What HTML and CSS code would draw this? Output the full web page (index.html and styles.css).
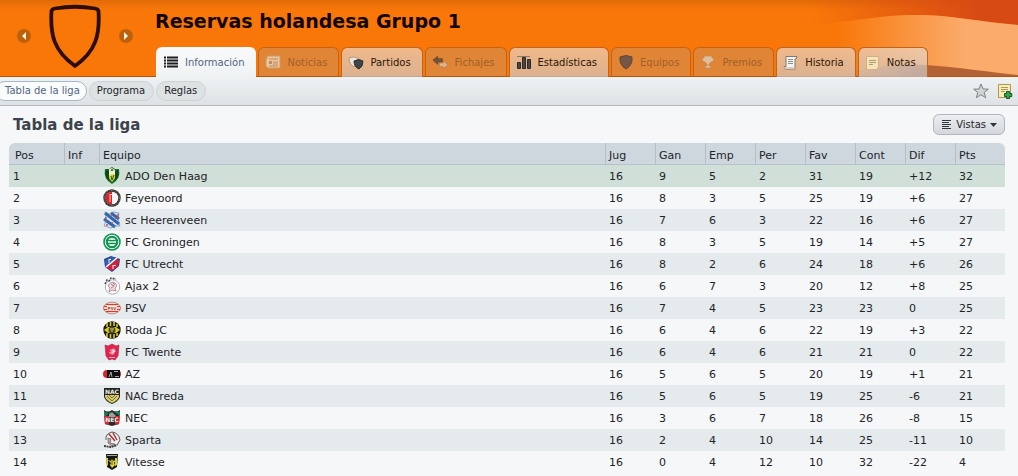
FILE: index.html
```html
<!DOCTYPE html>
<html lang="es">
<head>
    <meta charset="UTF-8">
    <meta name="viewport" content="width=device-width, initial-scale=1.0">
    <title>Reservas holandesa Grupo 1</title>
    <link rel="stylesheet" href="styles.css">
</head>
<body>
    <header class="header">
        <svg class="wave" width="260" height="76" viewBox="0 0 260 76" aria-hidden="true">
            <defs>
                <linearGradient id="waveDark" x1="0" x2="1">
                    <stop offset="0.2" stop-color="#d84a14" stop-opacity="0"/>
                    <stop offset="0.85" stop-color="#d84a14"/>
                </linearGradient>
                <linearGradient id="waveLight" x1="0" x2="1">
                    <stop offset="0" stop-color="#fbab6b" stop-opacity="0"/>
                    <stop offset="0.25" stop-color="#fbab6b" stop-opacity="0.35"/>
                    <stop offset="0.7" stop-color="#fbab6b"/>
                </linearGradient>
                <linearGradient id="waveBase" x1="0" x2="1">
                    <stop offset="0" stop-color="#b36233" stop-opacity="0"/>
                    <stop offset="0.4" stop-color="#b36233"/>
                </linearGradient>
            </defs>
            <path d="M0 0H260V25C215 21 190 14 150 15C120 16 100 20 80 22L0 34Z" fill="url(#waveDark)"/>
            <path d="M80 22C100 20 120 16 150 15C190 14 215 21 260 25V76H80Z" fill="url(#waveLight)"/>
            <path d="M90 72C120 66 145 64 168 65C200 67 230 72 260 75V76H90Z" fill="url(#waveBase)"/>
        </svg>
        <div class="picker">
            <button class="arrow" aria-label="Anterior"><svg width="14" height="14" viewBox="0 0 14 14"><path d="M9 3V11L5 7Z" fill="#fff3d8"/></svg></button>
            <svg class="shield" width="54" height="64" viewBox="0 0 54 64"><path d="M3.500 7Q4 5 7 4.500Q27 1 47 4.500Q50 5 50.500 7C52 31 48 47 27 62C6 47 2 31 3.500 7Z" fill="none" stroke="#2b0d02" stroke-width="3.800" stroke-linejoin="round"/></svg>
            <button class="arrow" aria-label="Siguiente"><svg width="14" height="14" viewBox="0 0 14 14"><path d="M5 3V11L9 7Z" fill="#fff3d8"/></svg></button>
        </div>
        <div class="headline">
            <h1>Reservas holandesa Grupo 1</h1>
            <nav class="tabs">
                <a class="tab active" href="#"><svg width="16" height="16" viewBox="0 0 16 16"><path d="M1 2.500H3M1 5.500H3M1 8.500H3M1 11.500H3M4 2.500H15M4 5.500H15M4 8.500H15M4 11.500H15" stroke="#1c1f22" stroke-width="1.800"/></svg>Información</a>
                <a class="tab off" href="#"><svg width="16" height="16" viewBox="0 0 16 16"><path d="M2 2H15V14H3L1 12V5H2Z" fill="#efc59a" stroke="#c89a6c"/><path d="M4 5H13M8 8H13M8 10H13M4 12H13" stroke="#b98c62"/><path d="M4 7H7V10H4Z" fill="#b98c62"/></svg>Noticias</a>
                <a class="tab" href="#"><svg width="16" height="16" viewBox="0 0 16 16"><path d="M1 3Q5 1 10 3Q10 9 6 12Q1 9 1 3Z" fill="#eee5dc" stroke="#b39a84"/><path d="M6 6Q11 3 15 6Q15 12 11 14Q6 12 6 6Z" fill="#414548" stroke="#2d3033"/></svg>Partidos</a>
                <a class="tab off" href="#"><svg width="17" height="16" viewBox="0 0 18 16"><path d="M1 6L6 2V4.500H11V8H6V10.500Z" fill="#75513a" stroke="#5f4028" stroke-width=".7"/><path d="M17 11L12 7V9H8V13H12V15Z" fill="#dcb48e" stroke="#ab7c52" stroke-width=".7"/></svg>Fichajes</a>
                <a class="tab" href="#"><svg width="16" height="16" viewBox="0 0 16 16"><path d="M1 1.500H14" stroke="#8e7764"/><path d="M1.500 7.500H4.500V13.500H1.500ZM6.500 2.500H9.500V13.500H6.500ZM11.500 4.500H14.500V13.500H11.500Z" fill="#4b4644" stroke="#302a27"/></svg>Estadísticas</a>
                <a class="tab off" href="#"><svg width="16" height="16" viewBox="0 0 16 16"><path d="M2 3Q8 0 14 3Q15 11 8 15Q1 11 2 3Z" fill="#765747" stroke="#654632"/></svg>Equipos</a>
                <a class="tab off" href="#"><svg width="16" height="16" viewBox="0 0 16 16"><path d="M4 2H12V4H14Q14 8 11 8L9 10V12H11V14H5V12H7V10L5 8Q2 8 2 4H4Z" fill="#e3bd96" stroke="#b98b60" stroke-width=".7"/></svg>Premios</a>
                <a class="tab" href="#"><svg width="16" height="16" viewBox="0 0 16 16"><path d="M3 1.500H14L13 4H12V14H2L1 11.500H3Z" fill="#f4f3ec" stroke="#827668"/><path d="M5 4.500H10M5 6.500H10M5 8.500H10" stroke="#819099"/><path d="M1 12H10L12 14H2Z" fill="#d3cdc2"/></svg>Historia</a>
                <a class="tab" href="#"><svg width="16" height="16" viewBox="0 0 16 16"><path d="M1.500 1.500H13.500V12L11.500 14.500H1.500Z" fill="#f6e4b8" stroke="#d0b088"/><path d="M4 5.500H11M4 7.500H11M4 9.500H8" stroke="#b39a70"/></svg>Notas</a>
            </nav>
        </div>
    </header>

    <div class="subnav">
        <nav class="pills">
            <a class="pill current" href="#">Tabla de la liga</a>
            <a class="pill" href="#">Programa</a>
            <a class="pill" href="#">Reglas</a>
        </nav>
        <div class="tools">
            <button class="tool" aria-label="Favorito"><svg width="16" height="16" viewBox="0 0 16 16"><path d="M8 1L10 6L15.300 6.200L11.200 9.500L12.600 14.700L8 11.700L3.400 14.700L4.800 9.500L.7 6.200L6 6Z" fill="#d2d5d8" stroke="#7c8186"/></svg></button>
            <button class="tool" aria-label="Añadir nota"><svg width="16" height="16" viewBox="0 0 16 16"><path d="M1.500 1.500H13.500V14.500H1.500Z" fill="#f8edb8" stroke="#ad9850"/><path d="M4 4.500H11M4 6.500H11M4 8.500H8" stroke="#ac9b5e"/><path d="M9.500 8.500H12.500V10.500H14.800V13.500H12.500V15.500H9.500V13.500H7.500V10.500H9.500Z" fill="#36a04b" stroke="#17582a"/></svg></button>
        </div>
    </div>

    <main class="content">
        <div class="bar">
            <h2>Tabla de la liga</h2>
            <button class="views"><svg width="11" height="11" viewBox="0 0 11 11"><path d="M1 1.500H10M1 3.500H8M1 5.500H10M1 7.500H8M1 9.500H10" stroke="#30363b"/></svg>Vistas<svg width="7" height="4" viewBox="0 0 7 4"><path d="M0 0H7L3.500 4Z" fill="#30363b"/></svg></button>
        </div>
        <table class="league">
            <thead>
                <tr><th class="pos">Pos</th><th class="inf">Inf</th><th>Equipo</th><th class="num">Jug</th><th class="num">Gan</th><th class="num">Emp</th><th class="num">Per</th><th class="num">Fav</th><th class="num">Cont</th><th class="num">Dif</th><th class="num">Pts</th></tr>
            </thead>
            <tbody>
                <tr class="leader"><td>1</td><td></td><td><div class="team"><svg class="crest" viewBox="0 0 18 18"><path d="M2 2L6 2L9 0L12 2L16 2Q18 12 9 17Q0 12 2 2Z" fill="#176b27"/><path d="M3 3L6 4V14Q1 9 3 3ZM15 3L12 4V14Q17 9 15 3Z" fill="#0a4a17"/><path d="M6 4H12V11L9 15L6 11Z" fill="#d9d23a"/><path d="M6 2L9 1L12 3V8L9 7L6 9Z" fill="#f0efd0"/><path d="M8 4L9 2L10 4M8 9L9 13L11 8" stroke="#34521c" fill="none"/></svg>ADO Den Haag</div></td><td>16</td><td>9</td><td>5</td><td>2</td><td>31</td><td>19</td><td>+12</td><td>32</td></tr>
                <tr><td>2</td><td></td><td><div class="team"><svg class="crest" viewBox="0 0 18 18"><circle cx="9" cy="9" r="8.700" fill="#332f30"/><circle cx="9" cy="9" r="7.500" fill="none" stroke="#8c8276" stroke-dasharray="1 1"/><circle cx="9" cy="9" r="6.300" fill="#f7f7f7"/><path d="M9 2.700A6.300 6.300 0 0 0 9 15.300Z" fill="#df2128"/><path d="M7 5V13M7 5.500H9M7 9H8" stroke="#f5c2b5"/></svg>Feyenoord</div></td><td>16</td><td>8</td><td>3</td><td>5</td><td>25</td><td>19</td><td>+6</td><td>27</td></tr>
                <tr><td>3</td><td></td><td><div class="team"><svg class="crest" viewBox="0 0 18 18"><path d="M2 1L6 3L10 1L16 2L15 8L17 15L12 15L8 17L1 15L3 9Z" fill="#dbe4f2"/><path d="M2 2L16 13M1 8L12 16M8 2L16 8" stroke="#2869ae" stroke-width="3"/><path d="M3 6V10M15 3V7M3 14H5M12 7H14M8 4H10M8 12H10" stroke="#d93c50" stroke-width="1.300"/><path d="M2 1L6 3L10 1L16 2L15 8L17 15L12 15L8 17L1 15L3 9Z" fill="none" stroke="#527eb2" stroke-width=".6"/></svg>sc Heerenveen</div></td><td>16</td><td>7</td><td>6</td><td>3</td><td>22</td><td>16</td><td>+6</td><td>27</td></tr>
                <tr><td>4</td><td></td><td><div class="team"><svg class="crest" viewBox="0 0 18 18"><circle cx="9" cy="9" r="8" fill="#fff" stroke="#129252" stroke-width="1.600"/><circle cx="9" cy="9" r="5.200" fill="#fff" stroke="#129252" stroke-width="2.200"/><path d="M5 7.500H13M5 10.500H13" stroke="#129252" stroke-width="1.500"/><path d="M7 9H11" stroke="#88c8a4"/></svg>FC Groningen</div></td><td>16</td><td>8</td><td>3</td><td>5</td><td>19</td><td>14</td><td>+5</td><td>27</td></tr>
                <tr><td>5</td><td></td><td><div class="team"><svg class="crest" viewBox="0 0 18 18"><path d="M1 4L8 1L17 4L16 11L9 17L2 12Z" fill="#2c3e8c"/><path d="M2 5L8 2L14 3L3 12Z" fill="#2f62b4"/><path d="M15 4L16 5L15 11L9 16L3 12Z" fill="#d3203a"/><path d="M3 12L14 3" stroke="#fff" stroke-width="1.500"/><path d="M6 4V8M6 4.500H8M10 10V14M10 10.500H13" stroke="#f1e6ed"/></svg>FC Utrecht</div></td><td>16</td><td>8</td><td>2</td><td>6</td><td>24</td><td>18</td><td>+6</td><td>26</td></tr>
                <tr><td>6</td><td></td><td><div class="team"><svg class="crest" viewBox="0 0 18 18"><circle cx="9.500" cy="10" r="7.200" fill="#fff" stroke="#9b9ba6" stroke-width=".8"/><path d="M2 7L4 3L6 4L8 1L13 2" fill="none" stroke="#454550" stroke-width="1.500" stroke-dasharray="2 1"/><path d="M6 7L9 5L12 6L14 9L12 11L13 14L9 13L6 15L7 11L5 9Z" fill="#f5dcdc" stroke="#a46674" stroke-width=".7"/><path d="M8 7L11 9L8 11M10 6L12 8" fill="none" stroke="#686b82" stroke-width=".7"/></svg>Ajax 2</div></td><td>16</td><td>6</td><td>7</td><td>3</td><td>20</td><td>12</td><td>+8</td><td>25</td></tr>
                <tr><td>7</td><td></td><td><div class="team"><svg class="crest" viewBox="0 0 18 18"><ellipse cx="9" cy="9" rx="8.600" ry="5.800" fill="#f5d3c6" stroke="#a66c5c" stroke-width=".7"/><path d="M3 5.500H15M1 7.500H17M1 10.500H17M3 12.500H15" stroke="#d83a31"/><path d="M4 7H14V11H4Z" fill="#fff5ec"/><text x="9" y="10.700" font-size="4" font-weight="bold" text-anchor="middle" fill="#b53b38">PSV</text></svg>PSV</div></td><td>16</td><td>7</td><td>4</td><td>5</td><td>23</td><td>23</td><td>0</td><td>25</td></tr>
                <tr><td>8</td><td></td><td><div class="team"><svg class="crest" viewBox="0 0 18 18"><circle cx="9" cy="9" r="8.700" fill="#19180c"/><path d="M4 2V6M7.500 1V5M11 1V5M14 3V6M4 12V16M7.500 13V17M11 13V17M14 12V15" stroke="#d9cb24" stroke-width="1.600"/><path d="M1 9L5 6H13L17 9L13 12H5Z" fill="#d8cc29"/><circle cx="9" cy="9" r="3.500" fill="#4f4b17"/><path d="M7 8H11M8 10H10" stroke="#e4da76"/></svg>Roda JC</div></td><td>16</td><td>6</td><td>4</td><td>6</td><td>22</td><td>19</td><td>+3</td><td>22</td></tr>
                <tr><td>9</td><td></td><td><div class="team"><svg class="crest" viewBox="0 0 18 18"><path d="M2 2L5 3L9 1L13 3L16 2L15 13L12 17L9 16L6 17L3 13Z" fill="#df244d" stroke="#ac2444" stroke-width=".6"/><path d="M6 6L8 7L11 5L13 8L10 12L7 11L6 9L8 9Z" fill="#ef8ba2"/><path d="M8 6L12 8L9 11L10 8Z" fill="#fff"/><path d="M6 14.500H12" stroke="#f5adba"/></svg>FC Twente</div></td><td>16</td><td>6</td><td>4</td><td>6</td><td>21</td><td>21</td><td>0</td><td>22</td></tr>
                <tr><td>10</td><td></td><td><div class="team"><svg class="crest" viewBox="0 0 18 18"><rect x="0" y="5" width="18" height="8" rx="4" fill="#d9242c"/><rect x="4" y="5" width="13" height="8" fill="#111"/><path d="M6 12L8 7L9 12M11 6.500H15M12 11.500H16" fill="none" stroke="#cfcfcf" stroke-width=".8"/></svg>AZ</div></td><td>16</td><td>5</td><td>6</td><td>5</td><td>20</td><td>19</td><td>+1</td><td>21</td></tr>
                <tr><td>11</td><td></td><td><div class="team"><svg class="crest" viewBox="0 0 18 18"><path d="M1 1H17V10Q15 15 9 17Q3 15 1 10Z" fill="#222322"/><text x="9" y="7" font-size="6" font-weight="bold" text-anchor="middle" fill="#eeece0">NAC</text><path d="M2 8H16V10Q14 14 9 16Q4 14 2 10Z" fill="#d8cb68"/><path d="M4 9L9 14L14 9M6 8L9 11L12 8" fill="none" stroke="#77743a"/></svg>NAC Breda</div></td><td>16</td><td>5</td><td>6</td><td>5</td><td>19</td><td>25</td><td>-6</td><td>21</td></tr>
                <tr><td>12</td><td></td><td><div class="team"><svg class="crest" viewBox="0 0 18 18"><path d="M1 1Q5 4 9 1Q13 4 17 1L16 15L9 17L2 15Z" fill="#292929"/><path d="M1 2L5 4L8 2L2 8Z" fill="#168052"/><path d="M10 2L17 3V7Z" fill="#1b8556"/><path d="M6 5L9 3L13 7V8H6Z" fill="#a0a0a0"/><path d="M1 7H6V16L2 15ZM12 7H17L16 15L12 16Z" fill="#cc2a33"/><text x="9" y="13" font-size="6" font-weight="bold" text-anchor="middle" fill="#f2f2ee">NEC</text></svg>NEC</div></td><td>16</td><td>3</td><td>6</td><td>7</td><td>18</td><td>26</td><td>-8</td><td>15</td></tr>
                <tr><td>13</td><td></td><td><div class="team"><svg class="crest" viewBox="0 0 18 18"><path d="M3 8Q4 1 10 1Q16 2 17 8L14 14L8 17L1 15L4 12Z" fill="#f4f0ef"/><path d="M3 9Q2 3 9 1Q16 2 17 9L14 14" fill="none" stroke="#5a5555"/><path d="M6 3L12 10M10 2L14 9" stroke="#a53236" stroke-width="1.500"/><path d="M5 7L8 8L7 12L12 13L9 15L5 12Z" fill="#b7aaa6" stroke="#675d5c" stroke-width=".7"/><path d="M1 15L8 16L14 14" fill="none" stroke="#403e40" stroke-width="2" stroke-dasharray="2 .6"/></svg>Sparta</div></td><td>16</td><td>2</td><td>4</td><td>10</td><td>14</td><td>25</td><td>-11</td><td>10</td></tr>
                <tr><td>14</td><td></td><td><div class="team"><svg class="crest" viewBox="0 0 18 18"><path d="M3 1H15L14 14L9 17L4 14Z" fill="#171811"/><path d="M3 5H5V13L4 12ZM12 5H14V12L12 13Z" fill="#d8cd32"/><path d="M5 7L8 8L9 6L10 8L13 7L11 10L12 12L9 15L7 12L8 10Z" fill="#e2d736"/><path d="M9 8V12" stroke="#686321"/><path d="M4 2.500H14" stroke="#a8a58a"/></svg>Vitesse</div></td><td>16</td><td>0</td><td>4</td><td>12</td><td>10</td><td>32</td><td>-22</td><td>4</td></tr>
            </tbody>
        </table>
    </main>
</body>
</html>
```

FILE: styles.css
```css
/* General Styles */
* {
    box-sizing: border-box;
}

body {
    margin: 0;
    background-color: #f5f7f9;
    color: #1e2428;
    font-family: "DejaVu Sans", sans-serif;
    font-size: 11px;
}

a {
    color: inherit;
    text-decoration: none;
}

button {
    padding: 0;
    border: none;
    background: none;
    color: inherit;
    font: inherit;
    cursor: pointer;
}

svg {
    display: block;
    flex: none;
}

/* Header */
.header {
    position: relative;
    display: flex;
    height: 77px;
    border-bottom: 1px solid #b5530c;
    background: linear-gradient(#e26a08, #f97709 10px, #f97709);
}

.wave {
    position: absolute;
    top: 0;
    right: 0;
}

.picker {
    display: flex;
    align-items: center;
    justify-content: space-between;
    width: 155px;
    padding: 0 22px 4px 17px;
}

.arrow {
    border-radius: 50%;
    background: #bd600d;
}

.headline {
    position: relative;
    display: flex;
    flex-direction: column;
    justify-content: space-between;
    height: 77px;
    padding-top: 10px;
}

h1 {
    margin: 0;
    color: #120600;
    font-size: 19px;
    line-height: 22px;
}

.tabs {
    display: flex;
    gap: 2px;
    padding-left: 1px;
}

.tab {
    display: flex;
    align-items: center;
    gap: 6px;
    height: 30px;
    padding: 0 11px 0 6px;
    border: 1px solid #bd661f;
    border-bottom: none;
    border-radius: 6px 6px 0 0;
    background: linear-gradient(rgba(233, 228, 223, 0.6), rgba(203, 209, 216, 0.65));
    background-clip: padding-box;
    color: #2b1605;
    font-size: 10px;
}

.tab.off {
    border-color: #c8620f;
    border-bottom: 1px solid #b5530c;
    background: #e08536;
    color: #a05f29;
}

.tab.active {
    border-color: #f7f9fa;
    background: linear-gradient(#f8fafb, #eff2f3);
    color: #52657f;
}

/* Sub navigation */
.subnav {
    display: flex;
    align-items: center;
    justify-content: space-between;
    height: 29px;
    padding-right: 5px;
    border-bottom: 1px solid #b4b9bd;
    background: linear-gradient(#eff2f3, #dfe2e4);
}

.pills {
    display: flex;
    gap: 2px;
    margin-left: -5px;
}

.pill {
    padding: 0 8px 0 7px;
    border: 1px solid #ccd3d5;
    border-radius: 10px;
    background: #dde3e3;
    font-size: 10px;
    line-height: 18px;
}

.pill.current {
    padding: 0 6px 0 9px;
    border-color: #a9b8c3;
    background: #fbfcfd;
    color: #52657f;
}

.tools {
    display: flex;
    gap: 8px;
}

/* Content */
.content {
    padding: 7px 13px 0 9px;
}

.bar {
    display: flex;
    align-items: center;
    justify-content: space-between;
    height: 30px;
    padding: 0 0 7px 4px;
}

h2 {
    margin: 0;
    color: #3c434a;
    font-size: 15px;
}

.views {
    display: flex;
    align-items: center;
    gap: 4px;
    height: 21px;
    padding: 0 7px;
    border: 1px solid #b0b6bd;
    border-radius: 6px;
    background: linear-gradient(#eceef1, #d3d7dc);
    font-size: 10px;
}

/* League table */
.league {
    width: 100%;
    border-collapse: separate;
    border-spacing: 0;
    table-layout: fixed;
}

.league th {
    height: 22px;
    padding: 3px 3px 0;
    border-bottom: 1px solid #b5c3ca;
    border-left: 1px solid #b3c0c7;
    background: #cdd7dd;
    font-weight: normal;
    text-align: left;
}

.league th:first-child {
    padding-left: 6px;
    border-left: none;
    border-top-left-radius: 6px;
}

.league th:last-child {
    border-top-right-radius: 6px;
}

.league td {
    height: 22px;
    padding: 0 4px;
}

.league tbody tr:nth-child(odd) {
    background: #e5eaed;
}

.league tbody tr.leader {
    background: #d0dfd7;
}

.pos {
    width: 55px;
}

.inf {
    width: 35px;
}

.num {
    width: 50px;
}

.team {
    display: flex;
    align-items: center;
    gap: 4px;
}

.crest {
    width: 18px;
    height: 18px;
}
```
